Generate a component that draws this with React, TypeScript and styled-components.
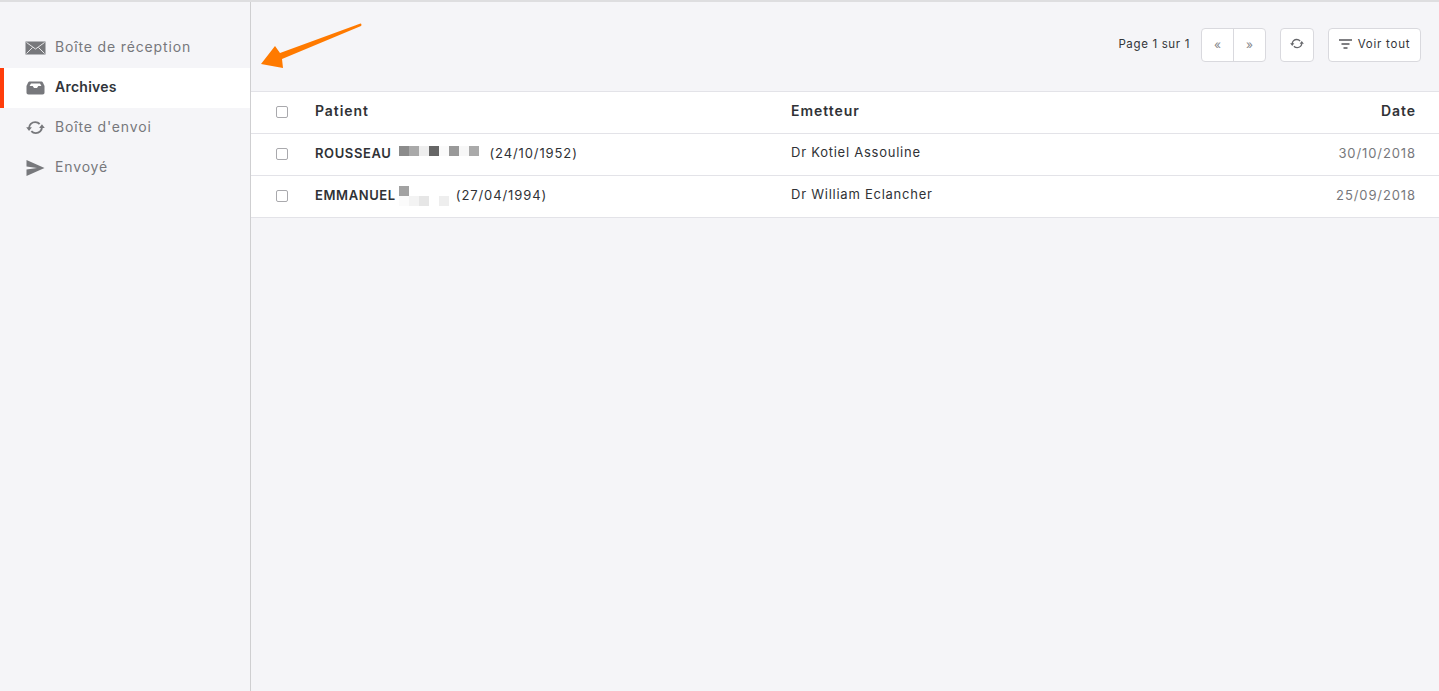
import React from "react";
import styled, { createGlobalStyle } from "styled-components";

const GlobalStyle = createGlobalStyle`
  html, body {
    margin: 0;
    padding: 0;
    height: 100%;
    background: #f5f5f8;
    font-family: Inter, "Noto Sans", sans-serif;
    color: #2b2e33;
    overflow: hidden;
  }
`;

const Page = styled.div`
  position: relative;
  display: flex;
  width: 1439px;
  height: 691px;
  box-sizing: border-box;
  border-top: 2px solid #dedee0;
`;

const Sidebar = styled.nav`
  box-sizing: border-box;
  width: 251px;
  flex: none;
  padding-top: 26px;
  border-right: 1px solid #cfcfd1;
`;

const NavItem = styled.div<{ $active?: boolean }>`
  box-sizing: border-box;
  display: flex;
  align-items: center;
  gap: 9px;
  height: 40px;
  font-size: 14px;
  letter-spacing: ${(p) => (p.$active ? "0.25px" : "0.85px")};
  font-weight: ${(p) => (p.$active ? 600 : 400)};
  color: ${(p) => (p.$active ? "#30343a" : "#77787c")};
  background: ${(p) => (p.$active ? "#fff" : "transparent")};
  border-left: ${(p) => (p.$active ? "4px solid #ff3d0a" : "none")};
  padding-left: ${(p) => (p.$active ? "21px" : "25px")};
`;

const NavLabel = styled.span`
  margin-bottom: 4px;
`;

const NavIcon = styled.span`
  display: flex;
  width: 21px;
  justify-content: center;
  color: #77787c;
  margin-bottom: 1px;
`;

const Main = styled.main`
  flex: 1;
  min-width: 0;
`;

const Toolbar = styled.div`
  box-sizing: border-box;
  height: 89px;
  display: flex;
  align-items: flex-start;
  justify-content: flex-end;
  gap: 14px;
  padding: 26px 18px 0 0;
`;

const PageLabel = styled.span`
  font-size: 11.5px;
  line-height: 33px;
  letter-spacing: 0.65px;
  color: #333539;
  margin-right: -3px;
`;

const ButtonGroup = styled.div`
  display: flex;
  width: 65px;
  height: 34px;
  box-sizing: border-box;
  background: #fff;
  border: 1px solid #d9d9de;
  border-radius: 4px;
`;

const GroupButton = styled.span`
  box-sizing: border-box;
  flex: 1;
  display: flex;
  align-items: center;
  justify-content: center;
  font-size: 12px;
  color: #85868a;
  padding-bottom: 1px;
  & + & {
    border-left: 1px solid #d9d9de;
  }
`;

const ToolButton = styled.button<{ $wide?: boolean }>`
  box-sizing: border-box;
  height: 34px;
  width: ${(p) => (p.$wide ? "93px" : "34px")};
  padding: 0 0 2px;
  display: flex;
  align-items: center;
  justify-content: center;
  gap: 6px;
  background: #fff;
  border: 1px solid #d9d9de;
  border-radius: 4px;
  font-family: inherit;
  font-size: 11.5px;
  letter-spacing: 0.75px;
  color: #333539;
`;

const Table = styled.div`
  background: #fff;
  border-top: 1px solid #e3e3e8;
`;

const Row = styled.div<{ $header?: boolean }>`
  box-sizing: border-box;
  height: 42px;
  display: grid;
  grid-template-columns: 64px 476px 1fr auto;
  align-items: center;
  padding: 0 23px 5px 0;
  border-bottom: 1px solid #e3e3e8;
  font-size: ${(p) => (p.$header ? "14px" : "13px")};
  letter-spacing: ${(p) => (p.$header ? "0.95px" : "0.75px")};
  font-weight: ${(p) => (p.$header ? 600 : 400)};
  color: #303236;
`;

const CheckCell = styled.div`
  display: flex;
  justify-content: center;
`;

const Check = styled.span`
  box-sizing: border-box;
  display: block;
  width: 12px;
  height: 12px;
  margin-top: 3px;
  margin-right: 2px;
  border: 1px solid #a9a9ad;
  border-radius: 2px;
  background: #fff;
`;

const PatientCell = styled.div`
  display: flex;
  align-items: center;
  font-size: 13px;
  letter-spacing: 0.9px;
  margin-top: 1px;
`;

const Surname = styled.strong`
  font-weight: 600;
  letter-spacing: 0.6px;
`;

const SenderCell = styled.div`
  margin-top: -1px;
`;

const DateCell = styled.div<{ $muted?: boolean }>`
  text-align: right;
  color: ${(p) => (p.$muted ? "#77787c" : "inherit")};
  letter-spacing: ${(p) => (p.$muted ? "0.9px" : "inherit")};
  margin-top: ${(p) => (p.$muted ? "1px" : "0")};
`;

const Blur = styled.svg<{ $after: string }>`
  display: block;
  flex: none;
  margin: ${(p) => p.$after};
`;

const Arrow = styled.svg`
  position: absolute;
  left: 255px;
  top: 13px;
`;

const blocksA: [number, number, string][] = [
  [0, 0, "#8b8b8b"],
  [10, 0, "#a9a9a9"],
  [20, 0, "#eeeeee"],
  [30, 0, "#666666"],
  [40, 0, "#fafafa"],
  [50, 0, "#999999"],
  [60, 0, "#f7f7f7"],
  [70, 0, "#aaaaaa"],
];

const blocksB: [number, number, string][] = [
  [0, 0, "#a2a2a2"],
  [0, 10, "#fbfbfb"],
  [10, 10, "#f3f3f3"],
  [20, 10, "#e6e6e6"],
  [40, 10, "#eeeeee"],
];

const Mosaic = ({ blocks, w, h, margin }: { blocks: [number, number, string][]; w: number; h: number; margin: string }) => (
  <Blur width={w} height={h} $after={margin}>
    {blocks.map(([x, y, c]) => (
      <rect key={`${x}-${y}`} x={x} y={y} width="10" height="10" fill={c} />
    ))}
  </Blur>
);

const MailIcon = () => (
  <svg width="21" height="14" viewBox="0 0 21 14">
    <rect width="20" height="13" y="0.5" x="0.5" fill="#77787c" />
    <path d="M1.5 1.5 10.5 8 19.5 1.5M1.5 12.5 7.5 6.5M19.5 12.5 13.5 6.5" fill="none" stroke="#f2f2f4" strokeWidth="0.9" />
  </svg>
);

const TrayIcon = () => (
  <svg width="19" height="14" viewBox="0 0 19 14">
    <path
      d="M4 0.5H15C16 0.5 16.6 1 17 1.8L18.5 5V11.5C18.5 12.8 17.8 13.5 16.5 13.5H2.5C1.2 13.5 0.5 12.8 0.5 11.5V5L2 1.8C2.4 1 3 0.5 4 0.5Z"
      fill="#77787c"
    />
    <path d="M3.6 5 5 2.6H14L15.4 5H12.3L11 7H8L6.7 5Z" fill="#fff" />
  </svg>
);

const SendIcon = () => (
  <svg width="19" height="16" viewBox="0 0 19 16">
    <path d="M0.5 0 18.5 8 0.5 16V9.6L11 8 0.5 6.4Z" fill="#77787c" />
  </svg>
);

const SyncIcon = ({ size, color }: { size: number; color: string }) => (
  <svg width={size} height={(size * 16) / 20} viewBox="0 0 20 16">
    <path
      d="M3.2 8.5C3.2 5 6 2.2 9.7 2.2c1.9 0 3.5.7 4.7 2M16.8 7.5C16.8 11 14 13.8 10.3 13.8c-1.9 0-3.5-.7-4.7-2"
      fill="none"
      stroke={color}
      strokeWidth="2"
    />
    <path d="M0.2 7.6H6.2L3.2 11.6ZM13.8 8.4H19.8L16.8 4.4Z" fill={color} />
  </svg>
);

const FilterIcon = () => (
  <svg width="13" height="10" viewBox="0 0 13 10">
    <path d="M0 1H13M2.5 5H10.5M4.5 9H8.5" fill="none" stroke="#55565a" strokeWidth="1.3" />
  </svg>
);

const App = () => (
  <>
    <GlobalStyle />
    <Page>
      <Sidebar>
        <NavItem>
          <NavIcon><MailIcon /></NavIcon>
          <NavLabel>Boîte de réception</NavLabel>
        </NavItem>
        <NavItem $active>
          <NavIcon><TrayIcon /></NavIcon>
          <NavLabel>Archives</NavLabel>
        </NavItem>
        <NavItem>
          <NavIcon><SyncIcon size={19} color="#77787c" /></NavIcon>
          <NavLabel>Boîte d'envoi</NavLabel>
        </NavItem>
        <NavItem>
          <NavIcon><SendIcon /></NavIcon>
          <NavLabel>Envoyé</NavLabel>
        </NavItem>
      </Sidebar>
      <Main>
        <Toolbar>
          <PageLabel>Page 1 sur 1</PageLabel>
          <ButtonGroup>
            <GroupButton>«</GroupButton>
            <GroupButton>»</GroupButton>
          </ButtonGroup>
          <ToolButton>
            <SyncIcon size={14} color="#66676b" />
          </ToolButton>
          <ToolButton $wide>
            <FilterIcon />
            Voir tout
          </ToolButton>
        </Toolbar>
        <Table>
          <Row $header>
            <CheckCell><Check /></CheckCell>
            <div>Patient</div>
            <div>Emetteur</div>
            <DateCell>Date</DateCell>
          </Row>
          <Row>
            <CheckCell><Check /></CheckCell>
            <PatientCell>
              <Surname>ROUSSEAU</Surname>
              <Mosaic blocks={blocksA} w={80} h={10} margin="-3px 10px 0 8px" />
              (24/10/1952)
            </PatientCell>
            <SenderCell>Dr Kotiel Assouline</SenderCell>
            <DateCell $muted>30/10/2018</DateCell>
          </Row>
          <Row>
            <CheckCell><Check /></CheckCell>
            <PatientCell>
              <Surname>EMMANUEL</Surname>
              <Mosaic blocks={blocksB} w={50} h={20} margin="3px 7px 0 3px" />
              (27/04/1994)
            </PatientCell>
            <SenderCell>Dr William Eclancher</SenderCell>
            <DateCell $muted>25/09/2018</DateCell>
          </Row>
        </Table>
      </Main>
      <Arrow width="110" height="58" viewBox="0 0 110 58">
        <path
          d="M105.5 8.5C106.5 8.5 106.8 10.5 106 11L27 44L28 53L6 49L20 31L25 38Z"
          fill="#ff7a00"
        />
      </Arrow>
    </Page>
  </>
);

export default App;
